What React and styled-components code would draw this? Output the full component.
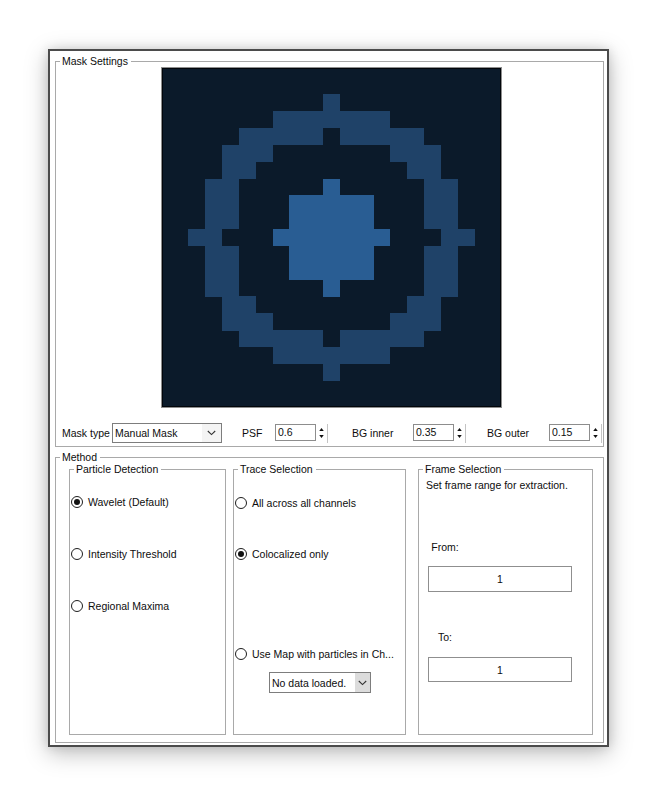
import React from 'react';
import styled, { createGlobalStyle } from 'styled-components';

const Global = createGlobalStyle`
  html, body { margin: 0; padding: 0; background: #fff; }
  body { font-family: "Liberation Sans", Arial, sans-serif; font-size: 10.5px; color: #0d0d0d; }
`;

const Page = styled.div`
  width: 658px;
  height: 797px;
  box-sizing: border-box;
  padding: 49px 0 0 48px;
  background: #fff;
`;

const Window = styled.div`
  width: 561px;
  height: 698px;
  box-sizing: border-box;
  border: 2px solid #4b4b4b;
  background: #fff;
  box-shadow: 0 6px 22px rgba(0, 0, 0, 0.26), 0 0 10px rgba(0, 0, 0, 0.12);
  padding: 4px 3px 0 5px;
  display: flex;
  flex-direction: column;
`;

const Group = styled.fieldset`
  margin: ${p => p.$mt || 0}px 0 0 ${p => p.$ml || 0}px;
  padding: 0;
  min-width: 0;
  border: 1px solid #a9a9a9;
  box-sizing: border-box;
  display: flex;
  flex-direction: column;
  ${p => (p.$w ? `width: ${p.$w}px; flex: none;` : '')}
  ${p => (p.$h ? `height: ${p.$h}px;` : '')}
`;

const Title = styled.legend`
  margin-left: 4px;
  padding: 0 3px 0 2px;
  font-size: 10.5px;
  line-height: 12px;
  color: #0d0d0d;
`;

const MaskBody = styled.div`
  display: flex;
  flex-direction: column;
  padding: 0 0 3px 0;
`;

const ImageBox = styled.div`
  align-self: center;
  margin-left: 4px;
  width: 341px;
  height: 341px;
  box-sizing: border-box;
  border: 1px solid #8e8e8e;
  padding: 1px;
  background: #02060b;
  svg { display: block; }
`;

const ParamRow = styled.div`
  display: flex;
  align-items: center;
  height: 20px;
  margin-top: 15px;
  padding-left: 6px;
`;

const FieldLabel = styled.span`
  width: ${p => p.$w}px;
  margin-left: ${p => p.$ml || 0}px;
  flex: none;
  white-space: nowrap;
  line-height: 12px;
`;

const SelectBox = styled.div`
  width: ${p => p.$w}px;
  height: ${p => p.$h}px;
  box-sizing: border-box;
  border: 1px solid #7d7d7d;
  background: #fff;
  display: flex;
  align-items: stretch;
  flex: none;
  align-self: ${p => p.$align || 'auto'};
  margin-top: ${p => p.$mt || 0}px;
`;

const SelectText = styled.span`
  flex: 1;
  padding-left: 2px;
  display: flex;
  align-items: center;
  white-space: nowrap;
  overflow: hidden;
`;

const SelectButton = styled.span`
  width: ${p => p.$w}px;
  background: ${p => p.$bg};
  display: flex;
  align-items: center;
  justify-content: center;
  flex: none;
`;

const Spinner = styled.div`
  width: 54px;
  height: 19px;
  display: flex;
  align-items: stretch;
  flex: none;
`;

const SpinText = styled.span`
  width: 41px;
  height: 17px;
  box-sizing: border-box;
  border: 1px solid #8d8d8d;
  padding-left: 2px;
  display: flex;
  align-items: center;
  align-self: flex-start;
`;

const SpinArrows = styled.span`
  width: 12px;
  display: flex;
  flex-direction: column;
  justify-content: space-between;
  align-items: center;
  padding: 4px 0 5px;
  box-sizing: border-box;
  border-right: 1px solid #c4c4c4;
`;

const MethodBody = styled.div`
  display: flex;
  padding: 0 10px 7px 13px;
`;

const PanelBody = styled.div`
  display: flex;
  flex-direction: column;
  padding: ${p => p.$pt}px 0 0 ${p => p.$pl}px;
`;

const RadioRow = styled.div`
  display: flex;
  align-items: center;
  height: 14px;
  gap: 5px;
  margin-top: ${p => p.$mt || 0}px;
  white-space: nowrap;
`;

const RadioDot = styled.span`
  width: 12px;
  height: 12px;
  border-radius: 50%;
  box-sizing: border-box;
  border: 1px solid #1e1e1e;
  background: #fff;
  flex: none;
  display: flex;
  align-items: center;
  justify-content: center;
  &::after {
    content: '';
    width: 6px;
    height: 6px;
    border-radius: 50%;
    background: #111;
    display: ${p => (p.$on ? 'block' : 'none')};
  }
`;

const Note = styled.div`
  line-height: 12px;
  margin-top: ${p => p.$mt || 0}px;
  margin-left: ${p => p.$ml || 0}px;
  width: ${p => (p.$w ? `${p.$w}px` : 'auto')};
  text-align: ${p => p.$align || 'left'};
  white-space: nowrap;
`;

const NumberBox = styled.div`
  width: 144px;
  height: ${p => p.$h}px;
  box-sizing: border-box;
  margin-top: ${p => p.$mt}px;
  margin-left: 9px;
  border: 1px solid #8f8f8f;
  background: #fff;
  display: flex;
  align-items: center;
  justify-content: center;
`;

const Chevron = () => (
  <svg width="9" height="6" viewBox="0 0 9 6">
    <polyline points="0.8,1 4.5,4.6 8.2,1" fill="none" stroke="#333" strokeWidth="1.1" />
  </svg>
);

const Up = () => (
  <svg width="5" height="3" viewBox="0 0 6 4"><polygon points="3,0 6,4 0,4" fill="#111" /></svg>
);
const Down = () => (
  <svg width="5" height="3" viewBox="0 0 6 4"><polygon points="0,0 6,0 3,4" fill="#111" /></svg>
);

const ring = {
  2: [[10, 10]],
  3: [[7, 13]],
  4: [[5, 9], [11, 15]],
  5: [[4, 6], [14, 16]],
  6: [[4, 5], [15, 16]],
  7: [[3, 4], [16, 17]],
  8: [[3, 4], [16, 17]],
  9: [[3, 4], [16, 17]],
  10: [[2, 3], [17, 18]],
  11: [[3, 4], [16, 17]],
  12: [[3, 4], [16, 17]],
  13: [[3, 4], [16, 17]],
  14: [[4, 5], [15, 16]],
  15: [[4, 6], [14, 16]],
  16: [[5, 9], [11, 15]],
  17: [[7, 13]],
  18: [[10, 10]],
};

const core = {
  7: [[10, 10]],
  8: [[8, 12]],
  9: [[8, 12]],
  10: [[7, 13]],
  11: [[8, 12]],
  12: [[8, 12]],
  13: [[10, 10]],
};

const runs = (map, fill, key) =>
  Object.entries(map).flatMap(([r, list]) =>
    list.map(([a, b], i) => (
      <rect key={`${key}-${r}-${i}`} x={a} y={Number(r)} width={b - a + 1} height={1.02} fill={fill} />
    ))
  );

const MaskImage = () => (
  <svg width="337" height="337" viewBox="0.5 0.5 20 20" preserveAspectRatio="none" shapeRendering="crispEdges">
    <rect x="0" y="0" width="21" height="21" fill="#0b1a2a" />
    {runs(ring, '#1f4268', 'r')}
    {runs(core, '#295d93', 'c')}
  </svg>
);

const Select = ({ w, h, text, btnW, btnBg, align, mt }) => (
  <SelectBox $w={w} $h={h} $align={align} $mt={mt}>
    <SelectText>{text}</SelectText>
    <SelectButton $w={btnW} $bg={btnBg}>
      <Chevron />
    </SelectButton>
  </SelectBox>
);

const Spin = ({ value }) => (
  <Spinner>
    <SpinText>{value}</SpinText>
    <SpinArrows>
      <Up />
      <Down />
    </SpinArrows>
  </Spinner>
);

const Radio = ({ on, label, mt }) => (
  <RadioRow $mt={mt}>
    <RadioDot $on={on} />
    <span>{label}</span>
  </RadioRow>
);

export default function App() {
  return (
    <Page>
      <Global />
      <Window>
        <Group>
          <Title>Mask Settings</Title>
          <MaskBody>
            <ImageBox>
              <MaskImage />
            </ImageBox>
            <ParamRow>
              <FieldLabel $w={50}>Mask type</FieldLabel>
              <Select w={110} h={20} text="Manual Mask" btnW={19} btnBg="#f4f4f4" />
              <FieldLabel $w={33} $ml={20}>PSF</FieldLabel>
              <Spin value="0.6" />
              <FieldLabel $w={61} $ml={23}>BG inner</FieldLabel>
              <Spin value="0.35" />
              <FieldLabel $w={62} $ml={20}>BG outer</FieldLabel>
              <Spin value="0.15" />
            </ParamRow>
          </MaskBody>
        </Group>
        <Group $mt={4}>
          <Title>Method</Title>
          <MethodBody>
            <Group $w={157} $h={272}>
              <Title>Particle Detection</Title>
              <PanelBody $pt={20} $pl={1}>
                <Radio on label="Wavelet (Default)" />
                <Radio label="Intensity Threshold" mt={38} />
                <Radio label="Regional Maxima" mt={38} />
              </PanelBody>
            </Group>
            <Group $w={173} $h={272} $ml={7}>
              <Title>Trace Selection</Title>
              <PanelBody $pt={21} $pl={1}>
                <Radio label="All across all channels" />
                <Radio on label="Colocalized only" mt={37} />
                <Radio label="Use Map with particles in Ch..." mt={86} />
                <Select w={102} h={21} text="No data loaded." btnW={15} btnBg="#dcdcdc" align="center" mt={11} />
              </PanelBody>
            </Group>
            <Group $w={175} $h={272} $ml={12}>
              <Title>Frame Selection</Title>
              <PanelBody $pt={4} $pl={0}>
                <Note $ml={7}>Set frame range for extraction.</Note>
                <Note $mt={50} $w={52} $align="center">From:</Note>
                <NumberBox $mt={13} $h={26}>1</NumberBox>
                <Note $mt={39} $w={52} $align="center">To:</Note>
                <NumberBox $mt={14} $h={25}>1</NumberBox>
              </PanelBody>
            </Group>
          </MethodBody>
        </Group>
      </Window>
    </Page>
  );
}
